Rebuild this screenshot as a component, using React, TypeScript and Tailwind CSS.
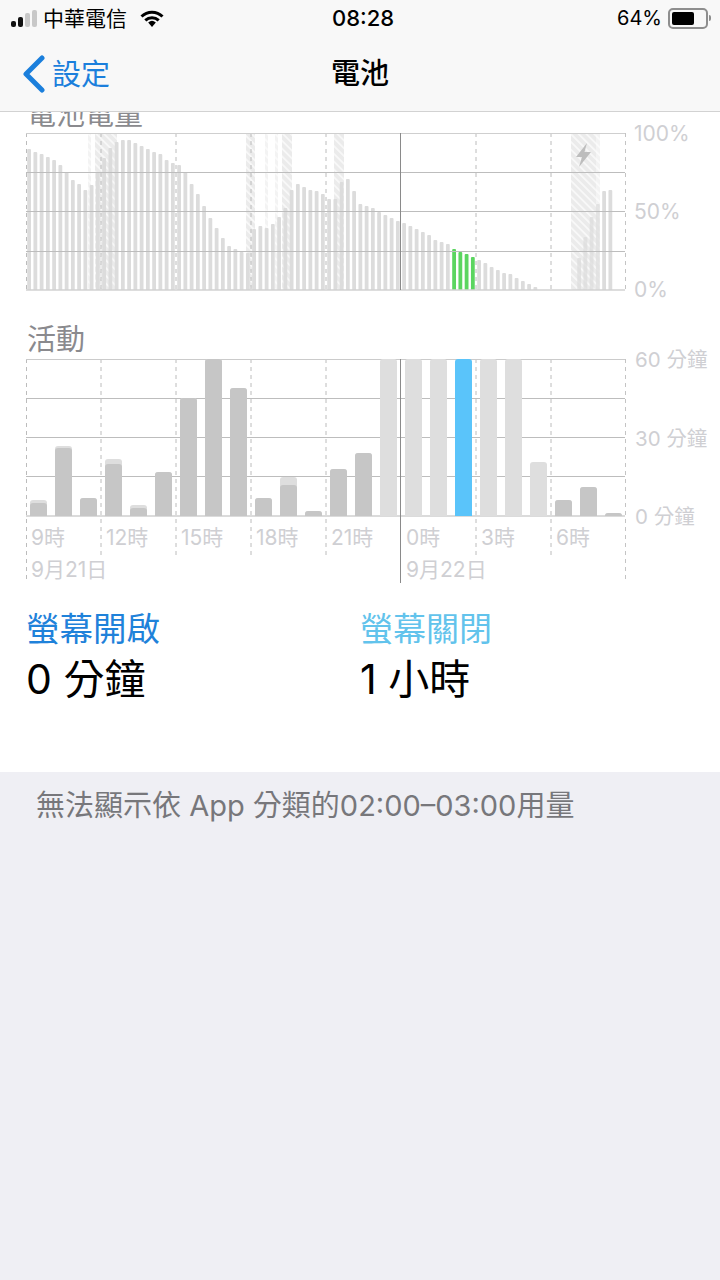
import React from "react";

const FONT = "'Inter','Noto Sans CJK TC',sans-serif";

// bar tops in px above the baseline, one bar per 15 minutes
const batteryLevels = [
  141, 138, 136, 133, 130, 125, 118, 110, 106, 100, 105, 118, 132, 142, 148, 150,
  150, 147, 144, 141, 138, 136, 130, 127, 125, 118, 106, 96, 84, 72, 62, 52,
  44, 41, 38, 37, 61, 64, 62, 66, 73, 82, 100, 106, 103, 100, 99, 96,
  91, 91, 108, 111, 99, 86, 84, 82, 78, 75, 72, 69, 67, 64, 61, 58,
  55, 50, 48, 46, 41, 38, 36, 33, 30, 27, 23, 20, 17, 16, 12, 9,
  6, 3, 0, 0, 0, 0, 0, 0, 32, 53, 73, 86, 99, 100, 0, 0,
];
const GREEN_BARS = [68, 69, 70, 71];

// charging spans across the battery chart [x, width]
const chargingSpans = [
  [88, 3],
  [95, 22],
  [246, 9],
  [265, 3],
  [275, 3],
  [282, 10],
  [334, 10],
  [571, 25],
  [596, 4],
];

type Hour = { on: number; off: number; active?: boolean };

const hours: Hour[] = [
  { on: 13, off: 16 },
  { on: 68, off: 70 },
  { on: 18, off: 18 },
  { on: 52, off: 57 },
  { on: 8, off: 11 },
  { on: 44, off: 44 },
  { on: 118, off: 118 },
  { on: 157, off: 157 },
  { on: 128, off: 128 },
  { on: 18, off: 18 },
  { on: 31, off: 39 },
  { on: 5, off: 5 },
  { on: 47, off: 47 },
  { on: 63, off: 63 },
  { on: 0, off: 157 },
  { on: 0, off: 157 },
  { on: 0, off: 157 },
  { on: 0, off: 157, active: true },
  { on: 0, off: 157 },
  { on: 0, off: 157 },
  { on: 0, off: 54 },
  { on: 16, off: 16 },
  { on: 29, off: 29 },
  { on: 3, off: 3 },
];

const hourLabels = [
  ["9時", 31],
  ["12時", 106],
  ["15時", 181],
  ["18時", 256],
  ["21時", 331],
  ["0時", 406],
  ["3時", 481],
  ["6時", 556],
] as const;

const dashedX = [26.5, 101, 176, 251, 326, 476, 551];

// bar with a rounded top, flat on the baseline
function topRounded(x: number, w: number, top: number, bottom: number, r: number) {
  const rr = Math.min(r, bottom - top);
  return `M${x} ${bottom}V${top + rr}Q${x} ${top} ${x + rr} ${top}H${x + w - rr}Q${x + w} ${top} ${x + w} ${top + rr}V${bottom}Z`;
}

function BatteryChart() {
  const top = 133;
  const bottom = 290;
  return (
    <svg viewBox="0 115 720 195" className="block w-[720px] h-[195px]">
      <defs>
        <pattern id="hatch" width="5.500" height="5.500" patternUnits="userSpaceOnUse" patternTransform="rotate(-45)">
          <rect width="5.500" height="5.500" fill="#ebebeb" />
          <rect width="1.800" height="5.500" fill="#f8f8f8" />
        </pattern>
      </defs>
      {chargingSpans.map(([x, w], i) => (
        <rect key={i} x={x} y={top} width={w} height={bottom - top} fill="url(#hatch)" opacity={w === 4 || w === 3 ? 0.6 : 1} />
      ))}
      {dashedX.map((x) => (
        <line key={x} x1={x} x2={x} y1={top} y2={bottom} stroke="#bcbcbc" strokeWidth="1" strokeDasharray="4 4" />
      ))}
      <line x1="625.5" x2="625.5" y1={top} y2={bottom} stroke="#c4c4c4" strokeDasharray="4 4" />
      {batteryLevels.map((h, i) => {
        if (!h) return null;
        const x = 27.2 + 6.25 * i;
        const green = GREEN_BARS.includes(i);
        const faded = i >= 88 && i <= 91;
        return (
          <path
            key={i}
            d={topRounded(x, 3.8, bottom - h, bottom, 1)}
            fill={green ? "#5bd560" : "#dcdcdc"}
            opacity={faded ? 0.75 : 1}
          />
        );
      })}
      {[172, 211, 251].map((y) => (
        <line key={y} x1="26" x2="625" y1={y + 0.5} y2={y + 0.5} stroke="#bdbdbd" />
      ))}
      <line x1="26" x2="625" y1="133.5" y2="133.5" stroke="#cfcfcf" />
      <line x1="26" x2="625" y1="290" y2="290" stroke="#d2d2d2" strokeWidth="1.5" />
      <line x1="400.5" x2="400.5" y1={top} y2={bottom} stroke="#8a8a8a" />
      <path d="M587 143l-11 14h6l-3 10 12-15h-6.500z" fill="#bdbdbd" />
      <g fill="#cfcfd3" fontSize="21">
        <text x="634" y="141">100%</text>
        <text x="634" y="219">50%</text>
        <text x="634" y="297">0%</text>
      </g>
    </svg>
  );
}

function ActivityChart() {
  const top = 359;
  const bottom = 516;
  return (
    <svg viewBox="0 345 720 240" className="block w-[720px] h-[240px]">
      {dashedX.map((x) => (
        <line key={x} x1={x} x2={x} y1={top} y2={x === 26.5 ? 583 : 555} stroke="#bcbcbc" strokeDasharray="4 4" />
      ))}
      <line x1="625.5" x2="625.5" y1={top} y2="583" stroke="#c4c4c4" strokeDasharray="4 4" />
      {[398, 437, 476].map((y) => (
        <line key={y} x1="26" x2="625" y1={y + 0.5} y2={y + 0.5} stroke="#bdbdbd" />
      ))}
      <line x1="26" x2="625" y1="359.5" y2="359.5" stroke="#cbcbcb" />
      <line x1="26" x2="625" y1="516" y2="516" stroke="#cfcfcf" strokeWidth="1.5" />
      {hours.map((hour, i) => {
        const x = 30 + 25 * i;
        return (
          <g key={i}>
            <path d={topRounded(x, 17, bottom - hour.off, bottom, 3)} fill={hour.active ? "#5ac4fa" : "#dedede"} />
            {hour.on > 0 && <path d={topRounded(x, 17, bottom - hour.on, bottom, 3)} fill="#c6c6c6" />}
          </g>
        );
      })}
      <line x1="400.5" x2="400.5" y1={top} y2="583" stroke="#8a8a8a" />
      <g fill="#cfcfd3" fontSize="20.500">
        <text x="635" y="367">60 分鐘</text>
        <text x="635" y="446">30 分鐘</text>
        <text x="635" y="524">0 分鐘</text>
      </g>
      <g fill="#cfcfd3" fontSize="21">
        {hourLabels.map(([label, x]) => (
          <text key={label} x={x} y="545">{label}</text>
        ))}
        <text x="31" y="577">9月21日</text>
        <text x="406" y="577">9月22日</text>
      </g>
    </svg>
  );
}

function StatusBar() {
  return (
    <div className="flex items-center justify-between h-[36px] pl-[11px] pr-[9px] text-black">
      <div className="flex items-center w-[251px]">
        <div className="flex items-end gap-[2px] h-[18px]">
          <span className="w-[5px] h-[6px] rounded-[2px] bg-[#111]" />
          <span className="w-[5px] h-[10px] rounded-[2px] bg-[#111]" />
          <span className="w-[5px] h-[14px] rounded-[2px] bg-[#c8c8c8]" />
          <span className="w-[5px] h-[17px] rounded-[2px] bg-[#c8c8c8]" />
        </div>
        <span className="ml-[6px] text-[21px] leading-none">中華電信</span>
        <svg viewBox="0 0 24 17" className="ml-[13px] w-[24px] h-[17px]">
          <path d="M12 17l-3.800-4.500a5.800 5.800 0 0 1 7.600 0z" fill="#000" />
          <path d="M1.500 6.500a15 15 0 0 1 21 0M5.300 10.300a9.800 9.800 0 0 1 13.400 0" stroke="#000" strokeWidth="3" fill="none" />
        </svg>
      </div>
      <span className="text-[22px] font-medium">08:28</span>
      <div className="flex items-center justify-end w-[247px]">
        <span className="text-[20px]">64%</span>
        <div className="ml-[6px] w-[40px] h-[21px] rounded-[5px] border-2 border-[#8e8e8e] p-[2px]">
          <div className="w-[22px] h-full rounded-[2px] bg-black" />
        </div>
        <span className="ml-[1px] w-[2px] h-[6px] rounded-r-sm bg-[#8e8e8e]" />
      </div>
    </div>
  );
}

export default function App() {
  return (
    <div className="w-[720px] h-[1280px] overflow-hidden bg-[#efeff4]" style={{ fontFamily: FONT }}>
      <header className="relative z-10 h-[112px] bg-[#f8f8f8] border-b border-[#d2d2d2]">
        <StatusBar />
        <nav className="relative flex items-center justify-center h-[75px]">
          <div className="absolute left-[22px] top-[19px] flex items-center text-[#1b7fdc]">
            <svg viewBox="0 0 24 38" className="w-[24px] h-[38px]">
              <path d="M20 3L4 19l16 16" stroke="#1b7fdc" strokeWidth="5" strokeLinecap="round" strokeLinejoin="round" fill="none" />
            </svg>
            <span className="ml-[6px] text-[29px] leading-none">設定</span>
          </div>
          <h1 className="text-[29px] leading-none font-medium text-black">電池</h1>
        </nav>
      </header>

      <main>
        <section className="-mt-[15px] bg-white h-[675px]">
          <h2 className="pl-[27px] h-[18px] text-[29px] leading-[35px] text-[#8a8a8e]">電池電量</h2>
          <BatteryChart />
          <h2 className="pl-[27px] h-[35px] pt-[12px] text-[29px] leading-[35px] text-[#8a8a8e]">活動</h2>
          <ActivityChart />
          <div className="flex pl-[26px] pt-[22px]">
            <div className="w-[334px]">
              <div className="text-[33.500px] leading-[44px] text-[#1f82da]">螢幕開啟</div>
              <div className="text-[41px] leading-[56px] text-black">0 分鐘</div>
            </div>
            <div>
              <div className="text-[33px] leading-[44px] text-[#62c3ec]">螢幕關閉</div>
              <div className="text-[41px] leading-[56px] text-black">1 小時</div>
            </div>
          </div>
        </section>
        <p className="pl-[36px] pt-[14px] text-[29px] leading-[40px] text-[#77777b]">無法顯示依 App 分類的02:00–03:00用量</p>
      </main>
    </div>
  );
}
